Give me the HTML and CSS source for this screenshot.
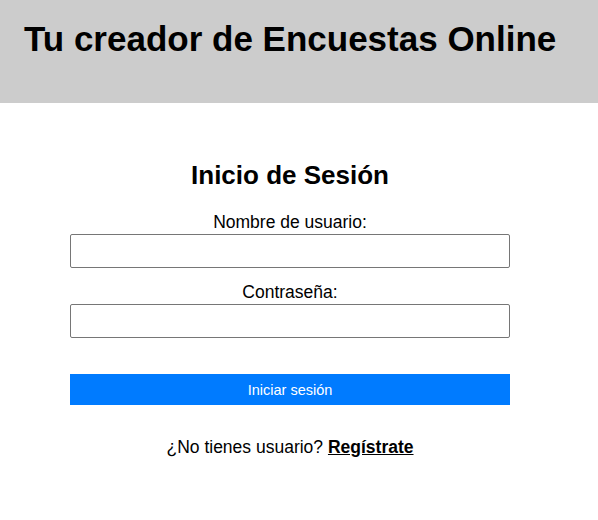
FILE: index.html
```html
<!DOCTYPE html>
<html lang="es">
<head>
<meta charset="utf-8">
<title>Inicio de Sesión</title>
<link rel="stylesheet" href="styles.css">
</head>
<body>
<header class="site-header">
  <h1 class="site-title">Tu creador de Encuestas Online</h1>
</header>
<main class="login">
  <h2 class="login-title">Inicio de Sesión</h2>
  <form class="login-form">
    <label class="field-label" for="user">Nombre de usuario:</label>
    <input class="field-input" id="user" type="text">
    <label class="field-label field-label-2" for="pass">Contraseña:</label>
    <input class="field-input" id="pass" type="password">
    <button class="submit-btn" type="button">Iniciar sesión</button>
  </form>
  <p class="register">¿No tienes usuario? <a class="register-link" href="#">Regístrate</a></p>
</main>
</body>
</html>
```

FILE: styles.css
```css
html, body {
  margin: 0;
  padding: 0;
  background: #ffffff;
  font-family: "Liberation Sans", Arial, sans-serif;
  color: #000000;
}

.site-header {
  background: #cccccc;
  height: 103px;
  box-sizing: border-box;
  padding: 19px 24px 0;
}

.site-title {
  margin: 0;
  font-size: 35px;
  font-weight: bold;
  line-height: normal;
}

.login {
  width: 440px;
  margin: 57px 0 0 70px;
  display: flex;
  flex-direction: column;
  align-items: stretch;
  text-align: center;
}

.login-title {
  margin: 0;
  font-size: 26px;
  font-weight: bold;
  line-height: normal;
}

.login-form {
  display: flex;
  flex-direction: column;
  margin-top: 21px;
}

.field-label {
  font-size: 17.5px;
  line-height: normal;
  margin-bottom: 1px;
}

.field-label-2 {
  margin-top: 14px;
}

.field-input {
  box-sizing: border-box;
  height: 34px;
  width: 100%;
  margin: 0;
  border: 1px solid #767676;
  border-radius: 2px;
  background: #ffffff;
  font-size: 16px;
  padding: 0 6px;
}

.submit-btn {
  margin-top: 36px;
  height: 31px;
  border: none;
  border-radius: 0;
  background: #007bff;
  color: #ffffff;
  font-family: "Liberation Sans", Arial, sans-serif;
  font-size: 14.5px;
  padding: 0;
}

.register {
  margin: 32px 0 0;
  font-size: 17.5px;
  line-height: normal;
}

.register-link {
  color: #000000;
  font-weight: bold;
  text-decoration: underline;
}
```
